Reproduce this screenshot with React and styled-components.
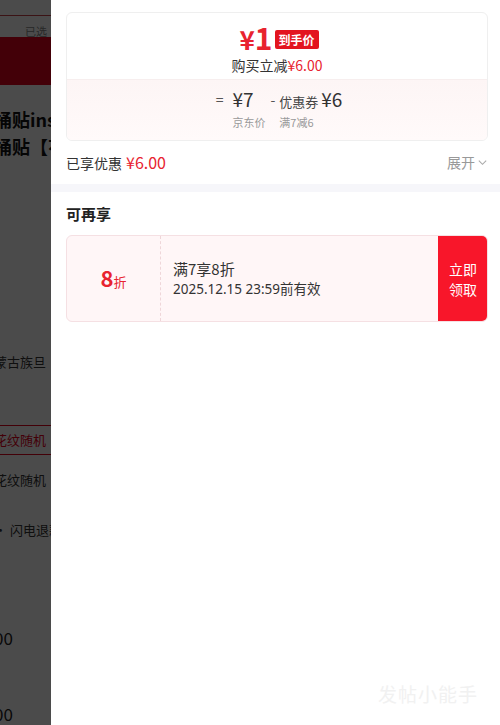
import React from "react";
import styled, { createGlobalStyle } from "styled-components";

const GlobalStyle = createGlobalStyle`
  html, body {
    margin: 0;
    padding: 0;
    height: 100%;
    overflow: hidden;
    background: #fff;
    font-family: "Noto Sans CJK SC", "Noto Sans", sans-serif;
  }
`;

const red = "#e8232f";

const Page = styled.div`
  width: 500px;
  height: 725px;
  position: relative;
  overflow: hidden;
  background: #fff;
`;

/* page underneath the drawer */
const Behind = styled.div`
  display: flex;
  flex-direction: column;
  width: 300px;
  margin-left: -6px;
`;

const TopLine = styled.div`
  margin-top: 15px;
  height: 1px;
  background: #c8404a;
`;

const Chosen = styled.div`
  height: 21px;
  box-sizing: border-box;
  padding: 9px 0 0 31px;
  font-size: 11px;
  line-height: 12px;
  color: #888;
`;

const RedBand = styled.div`
  height: 48px;
  background: #e4001c;
`;

const Title = styled.div`
  margin-top: ${(p) => p.$top}px;
  font-size: 18px;
  font-weight: bold;
  line-height: 27px;
  color: #111;
  white-space: nowrap;
`;

const Line = styled.div`
  margin-top: ${(p) => p.$top}px;
  font-size: ${(p) => p.$size || 13}px;
  line-height: 20px;
  color: ${(p) => p.$color || "#333"};
  white-space: nowrap;
`;

const OptionBox = styled.div`
  margin-top: ${(p) => p.$top}px;
  height: 28px;
  border: 1px solid #e4001c;
  border-left: none;
  color: #e4001c;
  font-size: 13px;
  line-height: 28px;
  white-space: nowrap;
`;

const Mask = styled.div`
  position: absolute;
  inset: 0;
  background: rgba(0, 0, 0, 0.705);
`;

const Drawer = styled.div`
  position: absolute;
  top: 0;
  right: 0;
  bottom: 0;
  width: 449px;
  background: #fff;
  display: flex;
  flex-direction: column;
`;

const Section = styled.div`
  padding: ${(p) => p.$pad};
  display: flex;
  flex-direction: column;
`;

const PriceCard = styled.div`
  border: 1px solid #efefef;
  border-radius: 6px;
  overflow: hidden;
  display: flex;
  flex-direction: column;
`;

const PriceTop = styled.div`
  height: 66px;
  display: flex;
  flex-direction: column;
  align-items: center;
  padding-top: 10px;
  box-sizing: border-box;
`;

const FinalRow = styled.div`
  display: flex;
  align-items: center;
  gap: 3px;
  height: 30px;
  margin-left: 4px;
`;

const BigPrice = styled.span`
  color: ${red};
  font-size: 30px;
  font-weight: bold;
  line-height: 30px;
  letter-spacing: -1px;

  small {
    font-size: 26px;
    margin-right: 1px;
  }
`;

const Badge = styled.span`
  background: #e3141f;
  color: #fff;
  font-size: 12px;
  font-weight: bold;
  line-height: 19px;
  padding: 0 4px;
  border-radius: 2px;
  margin-top: 2px;
`;

const Reduce = styled.div`
  font-size: 14px;
  line-height: 22px;
  color: #333;
  margin-top: 1px;

  span {
    color: ${red};
  }
`;

const PriceBottom = styled.div`
  height: 61px;
  border-top: 1px solid #f7eeee;
  background: linear-gradient(180deg, #fdf5f5 0%, #fffafa 100%);
  display: flex;
  justify-content: center;
  align-items: flex-start;
  padding-top: 7px;
  padding-left: 4px;
  box-sizing: border-box;
`;

const Op = styled.span`
  font-size: 14px;
  line-height: 24px;
  color: #555;
  margin: ${(p) => p.$m};
`;

const Col = styled.div`
  display: flex;
  flex-direction: column;
`;

const Val = styled.div`
  font-size: 13px;
  line-height: 24px;
  color: #444;
  white-space: nowrap;

  b {
    font-size: 19px;
    font-weight: normal;
    color: #333;
  }
`;

const Label = styled.div`
  font-size: 11px;
  line-height: 16px;
  color: #999;
  white-space: nowrap;
`;

const EnjoyRow = styled.div`
  display: flex;
  align-items: center;
  justify-content: space-between;
  height: 22px;
  margin-top: 10px;
`;

const Enjoyed = styled.div`
  font-size: 14px;
  color: #333;

  span {
    color: ${red};
    font-size: 16px;
    margin-left: 4px;
  }
`;

const Expand = styled.div`
  display: flex;
  align-items: center;
  gap: 2px;
  font-size: 14px;
  color: #999;
`;

const Band = styled.div`
  height: 8px;
  margin-top: 11px;
  background: #f6f6fa;
`;

const SubTitle = styled.div`
  font-size: 15px;
  font-weight: bold;
  color: #222;
  line-height: 20px;
`;

const Coupon = styled.div`
  margin-top: 11px;
  height: 87px;
  display: flex;
  border: 1px solid #f5e0e3;
  border-radius: 6px;
  background: #fff6f7;
  overflow: hidden;
  box-sizing: border-box;
`;

const Discount = styled.div`
  width: 94px;
  border-right: 1px dashed #efd6d9;
  display: flex;
  align-items: baseline;
  justify-content: center;
  padding-top: 29px;
  box-sizing: border-box;
  color: ${red};

  b {
    font-size: 22px;
    line-height: 24px;
  }
  span {
    font-size: 13px;
  }
`;

const Info = styled.div`
  flex: 1;
  padding-left: 12px;
  display: flex;
  flex-direction: column;
  justify-content: center;
  color: #333;
`;

const InfoMain = styled.div`
  font-size: 15px;
  line-height: 21px;
`;

const InfoSub = styled.div`
  font-size: 13.5px;
  line-height: 20px;
  font-family: "Noto Sans", "Noto Sans CJK SC", sans-serif;
`;

const TakeBtn = styled.button`
  width: 50px;
  border: none;
  background: #f8162a;
  color: #fff;
  font-family: inherit;
  font-size: 14px;
  line-height: 20px;
  padding: 0;
  margin: -1px -1px -1px 0;
`;

const Watermark = styled.div`
  position: absolute;
  right: 22px;
  bottom: 18px;
  font-size: 19px;
  color: #f1f1f1;
  letter-spacing: 1px;
`;

const Chevron = () => (
  <svg width="11" height="11" viewBox="0 0 12 12" fill="none">
    <path d="M2 4l4 4 4-4" stroke="#aaa" strokeWidth="1.2" />
  </svg>
);

export default function App() {
  return (
    <Page>
      <GlobalStyle />
      <Behind>
        <TopLine />
        <Chosen>已选</Chosen>
        <RedBand />
        <Title $top={21}>桶贴ins风简约</Title>
        <Title $top={0}>桶贴【花纹随机】</Title>
        <Line $top={192}>蒙古族旦</Line>
        <OptionBox $top={53}>花纹随机</OptionBox>
        <Line $top={15}>花纹随机</Line>
        <Line $top={30}>· 闪电退款</Line>
        <Line $top={88} $size={17} $color="#222">00</Line>
        <Line $top={56} $size={17} $color="#222">00</Line>
      </Behind>
      <Mask />
      <Drawer>
        <Section $pad="12px 12px 0 15px">
          <PriceCard>
            <PriceTop>
              <FinalRow>
                <BigPrice>
                  <small>¥</small>1
                </BigPrice>
                <Badge>到手价</Badge>
              </FinalRow>
              <Reduce>
                购买立减<span>¥6.00</span>
              </Reduce>
            </PriceTop>
            <PriceBottom>
              <Op $m="0 9px 0 0">=</Op>
              <Col>
                <Val>
                  <b>¥7</b>
                </Val>
                <Label>京东价</Label>
              </Col>
              <Op $m="0 4px 0 5px">-</Op>
              <Col>
                <Val>
                  优惠券 <b>¥6</b>
                </Val>
                <Label>满7减6</Label>
              </Col>
            </PriceBottom>
          </PriceCard>
          <EnjoyRow>
            <Enjoyed>
              已享优惠<span>¥6.00</span>
            </Enjoyed>
            <Expand>
              展开
              <Chevron />
            </Expand>
          </EnjoyRow>
        </Section>
        <Band />
        <Section $pad="12px 12px 0 15px">
          <SubTitle>可再享</SubTitle>
          <Coupon>
            <Discount>
              <b>8</b>
              <span>折</span>
            </Discount>
            <Info>
              <InfoMain>满7享8折</InfoMain>
              <InfoSub>2025.12.15 23:59前有效</InfoSub>
            </Info>
            <TakeBtn>
              立即
              <br />
              领取
            </TakeBtn>
          </Coupon>
        </Section>
        <Watermark>发帖小能手</Watermark>
      </Drawer>
    </Page>
  );
}
